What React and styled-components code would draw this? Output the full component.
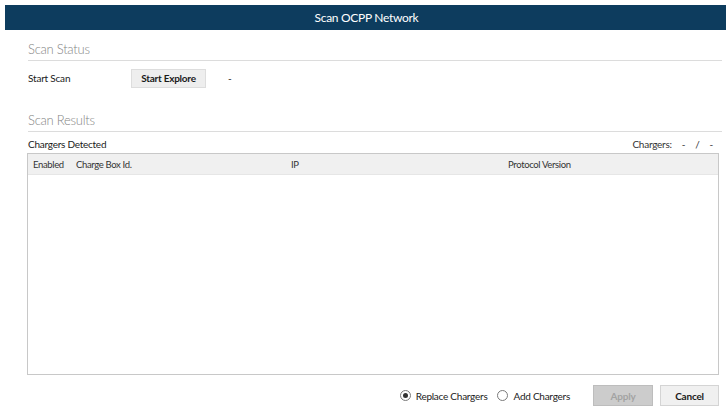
import React from "react";
import styled, { createGlobalStyle } from "styled-components";

const Global = createGlobalStyle`
  html, body { margin: 0; padding: 0; background: #ffffff; }
  body { font-family: "Segoe UI", Lato, "Noto Sans", sans-serif; color: #1a1a1a; }
  * { box-sizing: border-box; }
`;

const Page = styled.div`
  width: 726px;
  height: 411px;
  padding: 5px 0 0 5px;
  overflow: hidden;
  background: #fff;
`;

const Header = styled.div`
  height: 25px;
  background: #0d3c5e;
  color: #ffffff;
  font-size: 12px;
  letter-spacing: -0.3px;
  display: flex;
  align-items: center;
  justify-content: center;
  padding-left: 2px;
`;

const Content = styled.div`
  padding: 0 4px 0 23px;
  display: flex;
  flex-direction: column;
`;

const SectionTitle = styled.div`
  margin-top: ${(p) => p.$top}px;
  height: 21px;
  line-height: 19px;
  font-size: 13px;
  letter-spacing: -0.25px;
  font-weight: 300;
  color: #858585;
  border-bottom: 1px solid #dcdcdc;
`;

const Row = styled.div`
  display: flex;
  align-items: center;
  margin-top: 7px;
  height: 20px;
  font-size: 10px;
  letter-spacing: -0.2px;
`;

const Label = styled.span`
  width: 103px;
`;

const SmallButton = styled.button`
  width: 75px;
  height: 19px;
  padding: 0;
  font-family: inherit;
  font-size: 10px;
  letter-spacing: -0.25px;
  font-weight: 700;
  color: #1a1a1a;
  background: #eeeeee;
  border: 1px solid #dddddd;
`;

const Dash = styled.span`
  margin-left: 22px;
`;

const DetectedBar = styled.div`
  margin-top: 2px;
  height: 19px;
  display: flex;
  align-items: center;
  justify-content: space-between;
  font-size: 10px;
  letter-spacing: -0.25px;
  padding-right: 9px;
`;

const Counter = styled.div`
  display: flex;
  gap: 10px;
  color: #333;
`;

const Table = styled.div`
  margin: 0 3px 0 -1px;
  height: 222px;
  border: 1px solid #c8c8c8;
  display: flex;
  flex-direction: column;
`;

const TableHead = styled.div`
  height: 21px;
  padding: 1px 0 0 5px;
  background: #f0f0f0;
  border-bottom: 1px solid #e6e6e6;
  display: grid;
  grid-template-columns: 43px 215px 217px 1fr;
  align-items: center;
  font-size: 9.5px;
  letter-spacing: -0.35px;
  color: #333;
`;

const Footer = styled.div`
  margin-top: 10px;
  display: flex;
  align-items: center;
  justify-content: flex-end;
  padding-right: 3px;
  font-size: 10px;
  letter-spacing: -0.25px;
  color: #222;
`;

const RadioLabel = styled.label`
  display: flex;
  align-items: center;
  gap: 5px;
  margin-right: ${(p) => p.$gap}px;
`;

const RadioDot = styled.span`
  width: 11px;
  height: 11px;
  border-radius: 50%;
  border: 1px solid #7a7a7a;
  background: #fff;
  display: flex;
  align-items: center;
  justify-content: center;
  &::after {
    content: "";
    width: 5px;
    height: 5px;
    border-radius: 50%;
    background: ${(p) => (p.$checked ? "#333" : "transparent")};
  }
`;

const ActionButton = styled.button`
  width: ${(p) => p.$w}px;
  height: 21px;
  padding: 0;
  margin-left: ${(p) => p.$ml}px;
  font-family: inherit;
  font-size: 10px;
  letter-spacing: -0.2px;
  font-weight: 700;
  color: ${(p) => (p.$disabled ? "#a3a3a3" : "#1a1a1a")};
  background: ${(p) => (p.$disabled ? "#cccccc" : "#f0f0f0")};
  border: 1px solid ${(p) => (p.$disabled ? "#bdbdbd" : "#d4d4d4")};
`;

export default function App() {
  return (
    <Page>
      <Global />
      <Header>Scan OCPP Network</Header>
      <Content>
        <SectionTitle $top={10}>Scan Status</SectionTitle>
        <Row>
          <Label>Start Scan</Label>
          <SmallButton>Start Explore</SmallButton>
          <Dash>-</Dash>
        </Row>
        <SectionTitle $top={23}>Scan Results</SectionTitle>
        <DetectedBar>
          <span>Chargers Detected</span>
          <Counter>
            <span>Chargers:</span>
            <span>-</span>
            <span>/</span>
            <span>-</span>
          </Counter>
        </DetectedBar>
        <Table>
          <TableHead>
            <span>Enabled</span>
            <span>Charge Box Id.</span>
            <span>IP</span>
            <span>Protocol Version</span>
          </TableHead>
        </Table>
        <Footer>
          <RadioLabel $gap={10}>
            <RadioDot $checked />
            Replace Chargers
          </RadioLabel>
          <RadioLabel $gap={0}>
            <RadioDot />
            Add Chargers
          </RadioLabel>
          <ActionButton $w={60} $ml={23} $disabled>Apply</ActionButton>
          <ActionButton $w={59} $ml={7}>Cancel</ActionButton>
        </Footer>
      </Content>
    </Page>
  );
}
